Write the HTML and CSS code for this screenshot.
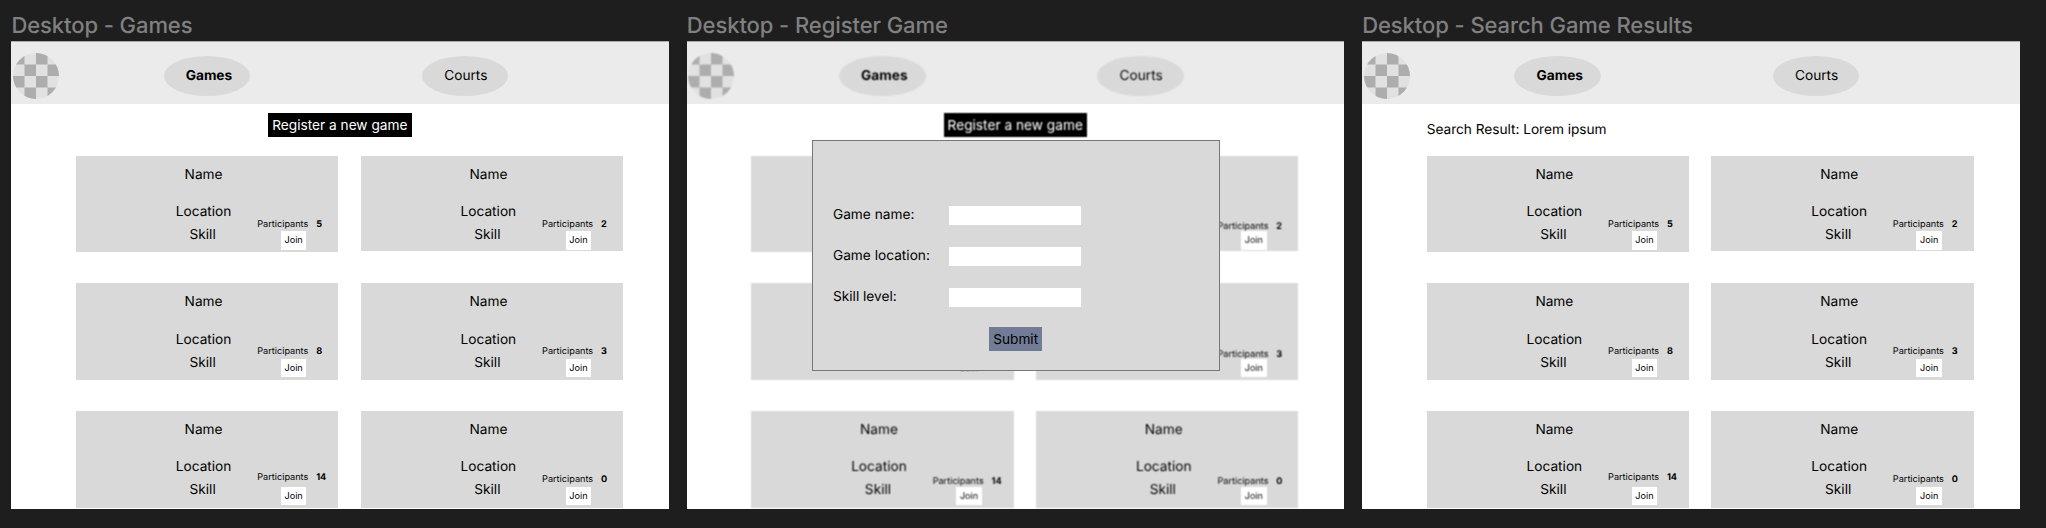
FILE: index.html
```
<!DOCTYPE html>
<html lang="en">
<head>
<meta charset="utf-8">
<title>Games</title>
<link rel="stylesheet" href="styles.css">
</head>
<body>
<main class="board">
  <section class="artboard">
    <h2 class="label">Desktop - Games</h2>
    <div class="frame">
      <div class="screen">
        <header class="bar">
          <svg class="avatar" viewBox="0 0 46 46"><use href="#checker"/></svg>
          <a class="pill current">Games</a><a class="pill">Courts</a>
        </header>
        <div class="intro"><button class="register">Register a new game</button></div>
        <div class="cards"></div>
      </div>
    </div>
  </section>
  <section class="artboard">
    <h2 class="label">Desktop - Register Game</h2>
    <div class="frame">
      <div class="screen blurred">
        <header class="bar">
          <svg class="avatar" viewBox="0 0 46 46"><use href="#checker"/></svg>
          <a class="pill current">Games</a><a class="pill">Courts</a>
        </header>
        <div class="intro"><button class="register">Register a new game</button></div>
        <div class="cards lowered"></div>
      </div>
      <form class="modal">
        <label class="field">Game name:<input class="input"></label>
        <label class="field">Game location:<input class="input"></label>
        <label class="field">Skill level:<input class="input"></label>
        <button type="button" class="submit">Submit</button>
      </form>
    </div>
  </section>
  <section class="artboard">
    <h2 class="label">Desktop - Search Game Results</h2>
    <div class="frame">
      <div class="screen">
        <header class="bar">
          <svg class="avatar" viewBox="0 0 46 46"><use href="#checker"/></svg>
          <a class="pill current">Games</a><a class="pill">Courts</a>
        </header>
        <div class="intro"><p class="result">Search Result: Lorem ipsum</p></div>
        <div class="cards"></div>
      </div>
    </div>
  </section>
</main>
<svg class="defs" width="0" height="0">
  <defs>
    <filter id="soften" color-interpolation-filters="sRGB">
      <feConvolveMatrix order="3" kernelMatrix="1 2 1 2 4 2 1 2 1" divisor="16" edgeMode="none" preserveAlpha="false"/>
    </filter>
    <clipPath id="round"><circle cx="23" cy="23" r="23"/></clipPath>
    <g id="checker" clip-path="url(#round)">
      <rect width="46" height="46" fill="#e1e1e1"/>
      <path fill="#adadad" d="M0 0h11.5v11.5H0zM23 0h11.5v11.5H23zM11.5 11.5H23V23H11.5zM34.5 11.5H46V23H34.5zM0 23h11.5v11.5H0zM23 23h11.5v11.5H23zM11.5 34.5H23V46H11.5zM34.5 34.5H46V46H34.5z"/>
    </g>
  </defs>
</svg>
<template id="card">
  <article class="card">
    <div class="details">
      <span class="name">Name</span>
      <span class="location">Location</span>
      <span class="skill">Skill</span>
    </div>
    <div class="side">
      <div class="count">Participants<b class="number"></b></div>
      <button class="join">Join</button>
    </div>
  </article>
</template>
<script src="cards.js"></script>
</body>
</html>
```
FILE: cards.js
```
const participants = [5, 2, 8, 3, 14, 0];
const template = document.getElementById("card");

document.querySelectorAll(".cards").forEach((list) => {
  participants.forEach((count) => {
    const card = template.content.cloneNode(true);
    card.querySelector(".number").textContent = count;
    list.append(card);
  });
});
```
FILE: styles.css
```
* { box-sizing: border-box; }

body {
  margin: 0;
  height: 528px;
  overflow: hidden;
  background: #1e1e1e;
  color: #000;
  font: 13.7px/18px Inter, sans-serif;
  text-rendering: geometricPrecision;
}

button, input {
  border: 0;
  padding: 0;
  border-radius: 0;
  font: inherit;
  color: inherit;
}

.defs { position: absolute; }

.board {
  display: grid;
  grid-template-columns: 657.4px 657.4px 657.4px;
  column-gap: 18px;
  padding: 13px 0 0 11.4px;
}

.label {
  margin: 0;
  height: 28.3px;
  font-size: 22px;
  line-height: 26px;
  font-weight: 450;
  letter-spacing: -0.08px;
  color: #808080;
  white-space: nowrap;
}

.frame {
  position: relative;
  height: 467.5px;
  overflow: hidden;
  background: #fff;
  border-top: 1px solid #aaa;
}

.screen { margin-top: -1px; height: 467.5px; }

.blurred .avatar,
.blurred .pill,
.blurred .register,
.blurred .card { filter: url(#soften); }

.bar {
  display: flex;
  align-items: flex-start;
  height: 62.3px;
  padding: 14.7px 0 0 1.6px;
  background: #ebebeb;
}

.avatar {
  width: 46px;
  height: 46px;
  margin-top: -3.1px;
  flex: none;
}

.pill {
  width: 86.5px;
  height: 40px;
  margin-left: 104.7px;
  padding-left: 1.4px;
  border-radius: 50%;
  background: #d9d9d9;
  line-height: 40px;
  text-align: center;
}

.pill + .pill { margin-left: 171.7px; }
.pill.current { font-weight: 700; padding-left: 4px; }

.intro {
  height: 52px;
  padding-top: 9.7px;
  text-align: center;
}

.register {
  display: inline-block;
  width: 143.4px;
  height: 24px;
  margin-left: -0.5px;
  background: #000;
  color: #fff;
  vertical-align: top;
}

.result {
  margin: 7.9px 0 0 64.5px;
  letter-spacing: -0.03px;
  text-align: left;
}

.cards {
  display: grid;
  grid-template-columns: 262.3px 262.3px;
  grid-auto-rows: 96.7px;
  gap: 31px 22.5px;
  padding-left: 64.5px;
}

.card {
  display: grid;
  grid-template-columns: 107.4px 1fr;
  padding-left: 74px;
  background: #d9d9d9;
}

.card:nth-child(2) { height: 95px; }

.details {
  display: flex;
  flex-direction: column;
  align-items: center;
  padding-top: 10px;
}

.location { margin-top: 19.3px; }
.skill { margin: 5.2px 2px 0 0; }

.side {
  font-size: 9.13px;
  line-height: 12px;
}

.count {
  height: 75.6px;
  padding-top: 63.2px;
  white-space: nowrap;
}

.card:nth-child(5) .count { padding-top: 61px; }
.lowered .card .count { padding-top: 65.4px; }

.number { margin-left: 7.8px; font-weight: 700; }

.join {
  display: block;
  width: 25.7px;
  height: 18.5px;
  margin-left: 23.5px;
  background: #fff;
}

.lowered .card:nth-child(3) .join { background: none; }

.modal {
  position: absolute;
  left: 125.2px;
  top: 97.7px;
  width: 408px;
  height: 231px;
  padding: 65px 0 0 20px;
  border: 1px solid #777;
  background: #d9d9d9;
}

.field {
  display: grid;
  grid-template-columns: 115.8px 132px;
  height: 41.2px;
  line-height: 18px;
}

.input { height: 19px; background: #fff; }

.submit {
  display: block;
  width: 53px;
  height: 24px;
  margin: -2.4px 0 0 156.2px;
  background: #727c97;
}
```
